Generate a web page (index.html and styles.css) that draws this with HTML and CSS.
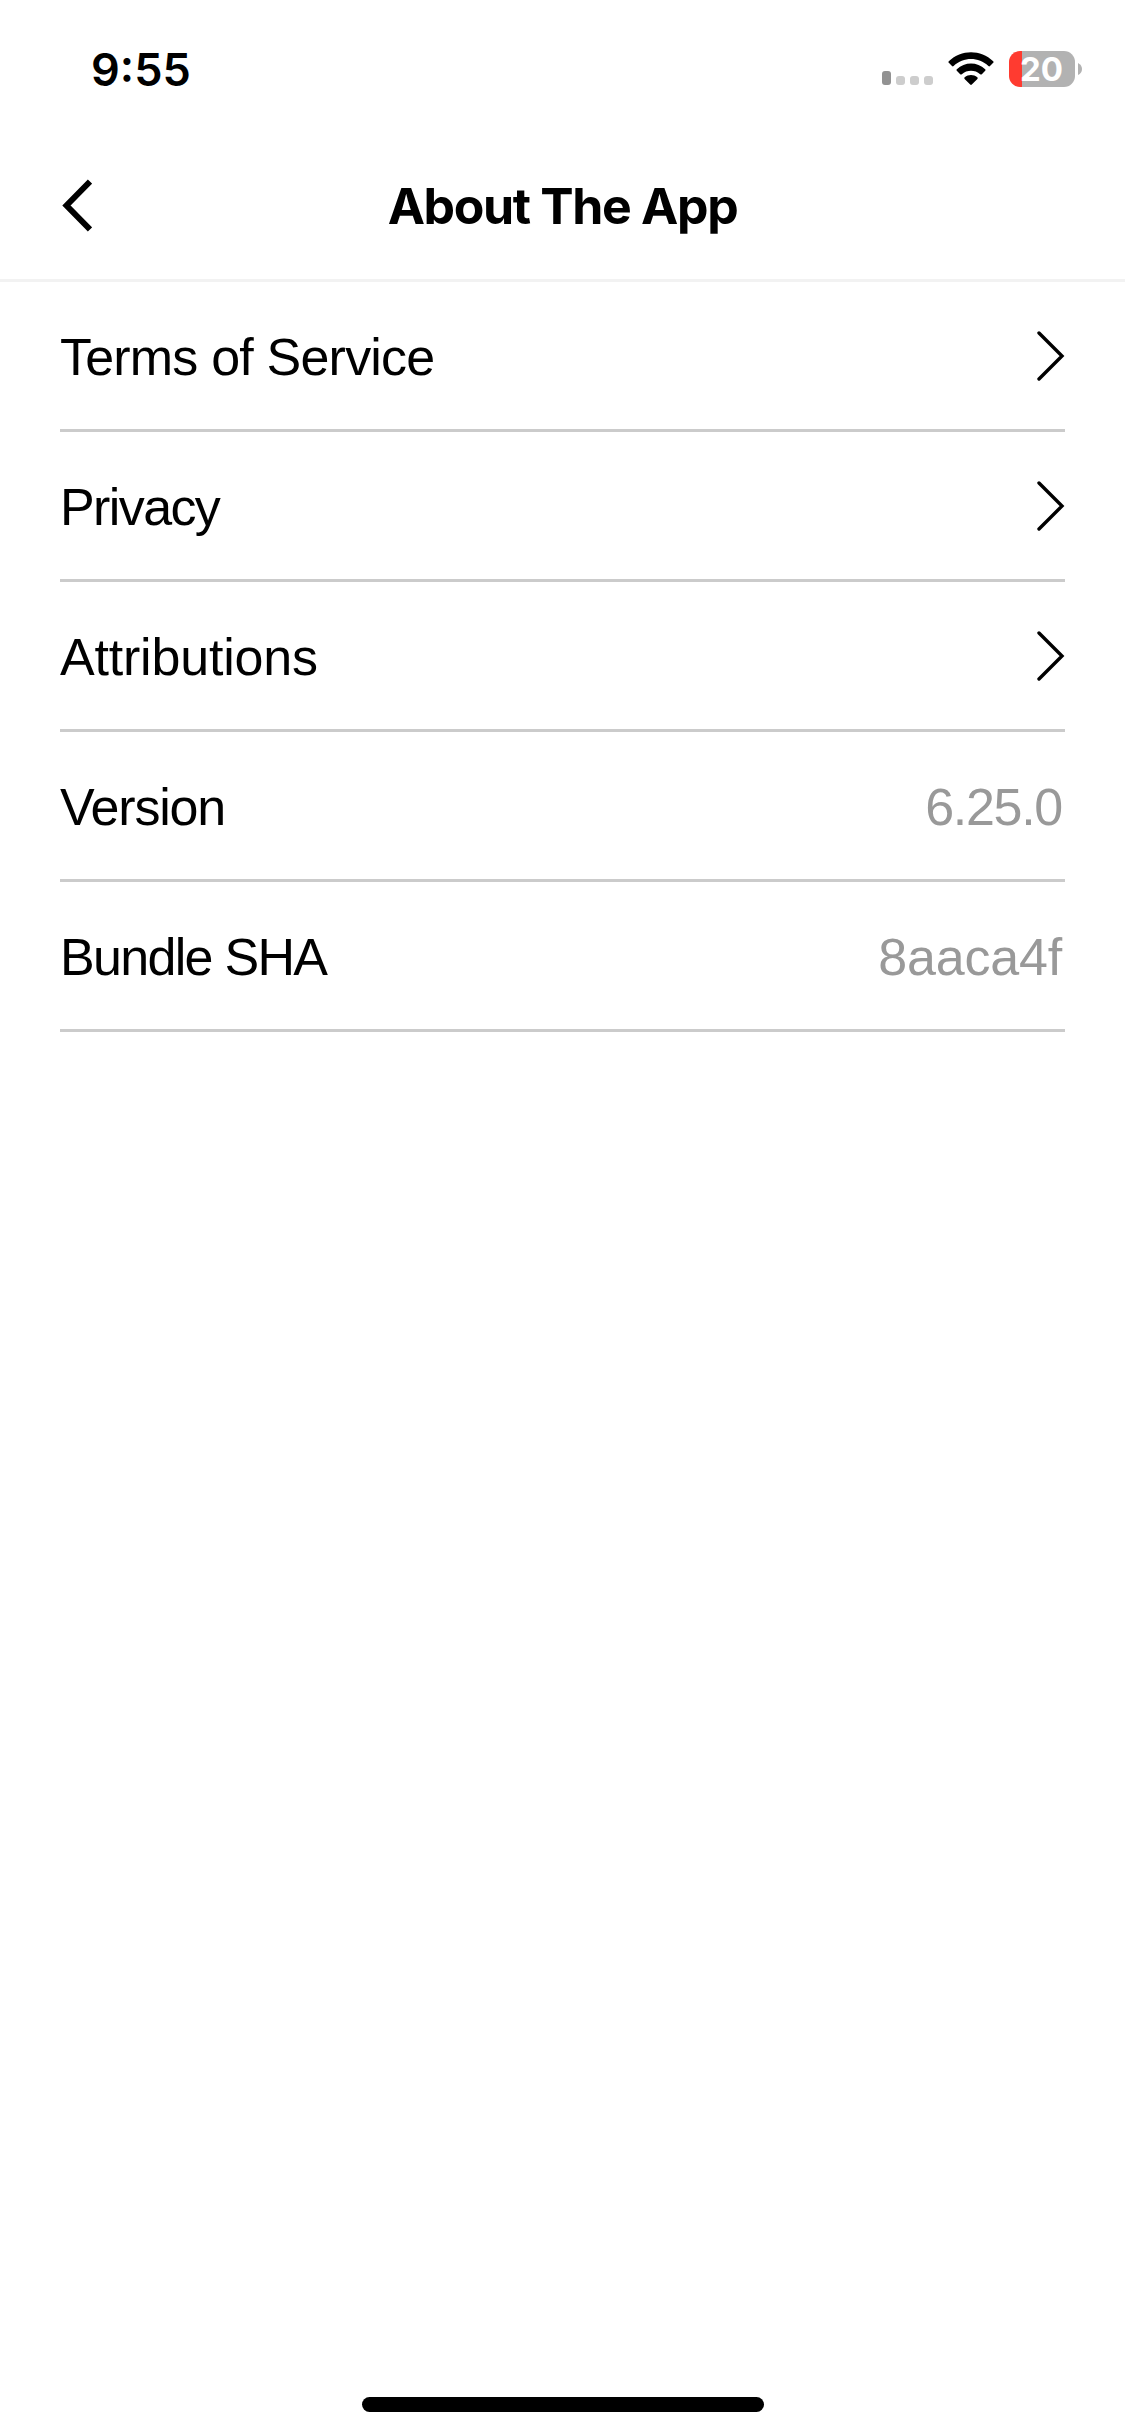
FILE: index.html
```html
<!DOCTYPE html>
<html lang="en">
<head>
<meta charset="utf-8">
<title>About The App</title>
<link rel="stylesheet" href="styles.css">
</head>
<body>
<div class="screen">
  <div class="status-bar">
    <span class="time">9:55</span>
    <div class="indicators">
      <svg class="signal" width="52" height="15" viewBox="0 0 52 15">
        <rect x="0" y="0" width="9" height="14" rx="3" fill="#929292"/>
        <rect x="14" y="5" width="9" height="9" rx="3" fill="#cdcdcd"/>
        <rect x="28" y="5" width="9" height="9" rx="3" fill="#cdcdcd"/>
        <rect x="42" y="5" width="9" height="9" rx="3" fill="#cdcdcd"/>
      </svg>
      <svg class="wifi" width="46" height="34" viewBox="0 0 46 34">
        <path d="M.8 9.2C13.2-2.9 32.8-2.9 45.2 9.2Q46 10 45.2 10.8L42 14Q41.2 14.8 40.4 14C30.6 4.8 15.4 4.8 5.6 14Q4.8 14.8 4 14L.8 10.8Q0 10 .8 9.2Z"/>
        <path d="M8.8 17.2C16.8 9.7 29.2 9.7 37.2 17.2Q38 18 37.2 18.8L33.8 22.2Q33 23 32.2 22.2C27 17.6 19 17.6 13.8 22.2Q13 23 12.2 22.2L8.8 18.8Q8 18 8.8 17.2Z"/>
        <path d="M16.7 25.3C20.3 22.2 25.7 22.2 29.3 25.3Q30.2 26 29.4 26.9L23.8 32.6Q23 33.4 22.2 32.6L16.6 26.9Q15.8 26 16.7 25.3Z"/>
      </svg>
      <div class="battery">
        <div class="battery-body">20</div>
        <svg width="4" height="12" viewBox="0 0 4 12"><path d="M0 0Q4 2 4 6T0 12Z" fill="#b2b2b2"/></svg>
      </div>
    </div>
  </div>
  <header class="nav">
    <svg class="back" width="30" height="54" viewBox="0 0 30 54"><path d="M28 2.5 4.5 26.5 28 50.5" fill="none" stroke="#000" stroke-width="6"/></svg>
    <h1 class="title">About The App</h1>
  </header>
  <ul class="list">
    <li class="row"><span class="label terms">Terms of Service</span><svg class="chevron" width="28" height="52" viewBox="0 0 28 52"><path d="M2 3 25 26 2 49"/></svg></li>
    <li class="row"><span class="label privacy">Privacy</span><svg class="chevron" width="28" height="52" viewBox="0 0 28 52"><path d="M2 3 25 26 2 49"/></svg></li>
    <li class="row"><span class="label attributions">Attributions</span><svg class="chevron" width="28" height="52" viewBox="0 0 28 52"><path d="M2 3 25 26 2 49"/></svg></li>
    <li class="row"><span class="label version">Version</span><span class="value number">6.25.0</span></li>
    <li class="row"><span class="label bundle">Bundle SHA</span><span class="value">8aaca4f</span></li>
  </ul>
  <div class="home-indicator"></div>
</div>
</body>
</html>
```
FILE: styles.css
```css
* { box-sizing: border-box; }
body { margin: 0; background: #fff; color: #000; }
svg { display: block; flex: none; }
.screen {
  display: flex;
  flex-direction: column;
  width: 1125px;
  height: 2436px;
  background: #fff;
  font-family: "Liberation Sans", Arial, sans-serif;
}
.status-bar {
  display: flex;
  justify-content: space-between;
  height: 132px;
  padding: 41px 43px 0 91px;
}
.time {
  font: 600 45px/58px Inter, sans-serif;
  letter-spacing: 0;
}
.indicators { display: flex; align-items: flex-start; }
.signal { margin-top: 30px; }
.wifi { margin: 11px 0 0 14px; }
.battery { display: flex; align-items: center; gap: 3px; margin: 10px 0 0 15px; }
.battery-body {
  width: 66px;
  height: 36px;
  padding-left: 11px;
  border-radius: 11px;
  background: linear-gradient(90deg, #ff3b30 13px, #b2b2b2 13px);
  color: #fff;
  font: 700 33px/37px Inter, sans-serif;
}
.nav {
  display: grid;
  grid-template-columns: 120px 1fr 120px;
  align-items: center;
  height: 150px;
  border-bottom: 3px solid #f2f2f2;
}
.back { margin-left: 62px; }
.title {
  margin: 0;
  padding-top: 1px;
  text-align: center;
  white-space: nowrap;
  font: 700 50px/60px Inter, sans-serif;
  letter-spacing: -1.35px;
}
.list { margin: 0; padding: 0 60px; list-style: none; }
.row {
  display: flex;
  align-items: center;
  justify-content: space-between;
  height: 150px;
  border-bottom: 3px solid #cbcbcb;
  font-size: 52px;
  line-height: 60px;
}
.label, .value { padding-top: 2px; }
.chevron path {
  fill: none;
  stroke: #000;
  stroke-width: 3.4;
  stroke-linecap: round;
}
.terms { letter-spacing: -0.8px; }
.privacy { letter-spacing: -1.6px; }
.attributions { letter-spacing: -0.2px; }
.version { letter-spacing: -1.2px; }
.bundle { letter-spacing: -1.7px; }
.value { padding-right: 3px; color: #999; letter-spacing: -0.2px; }
.number { letter-spacing: -1.3px; }
.home-indicator {
  width: 402px;
  height: 15px;
  margin: auto auto 24px;
  border-radius: 8px;
  background: #000;
}
```
